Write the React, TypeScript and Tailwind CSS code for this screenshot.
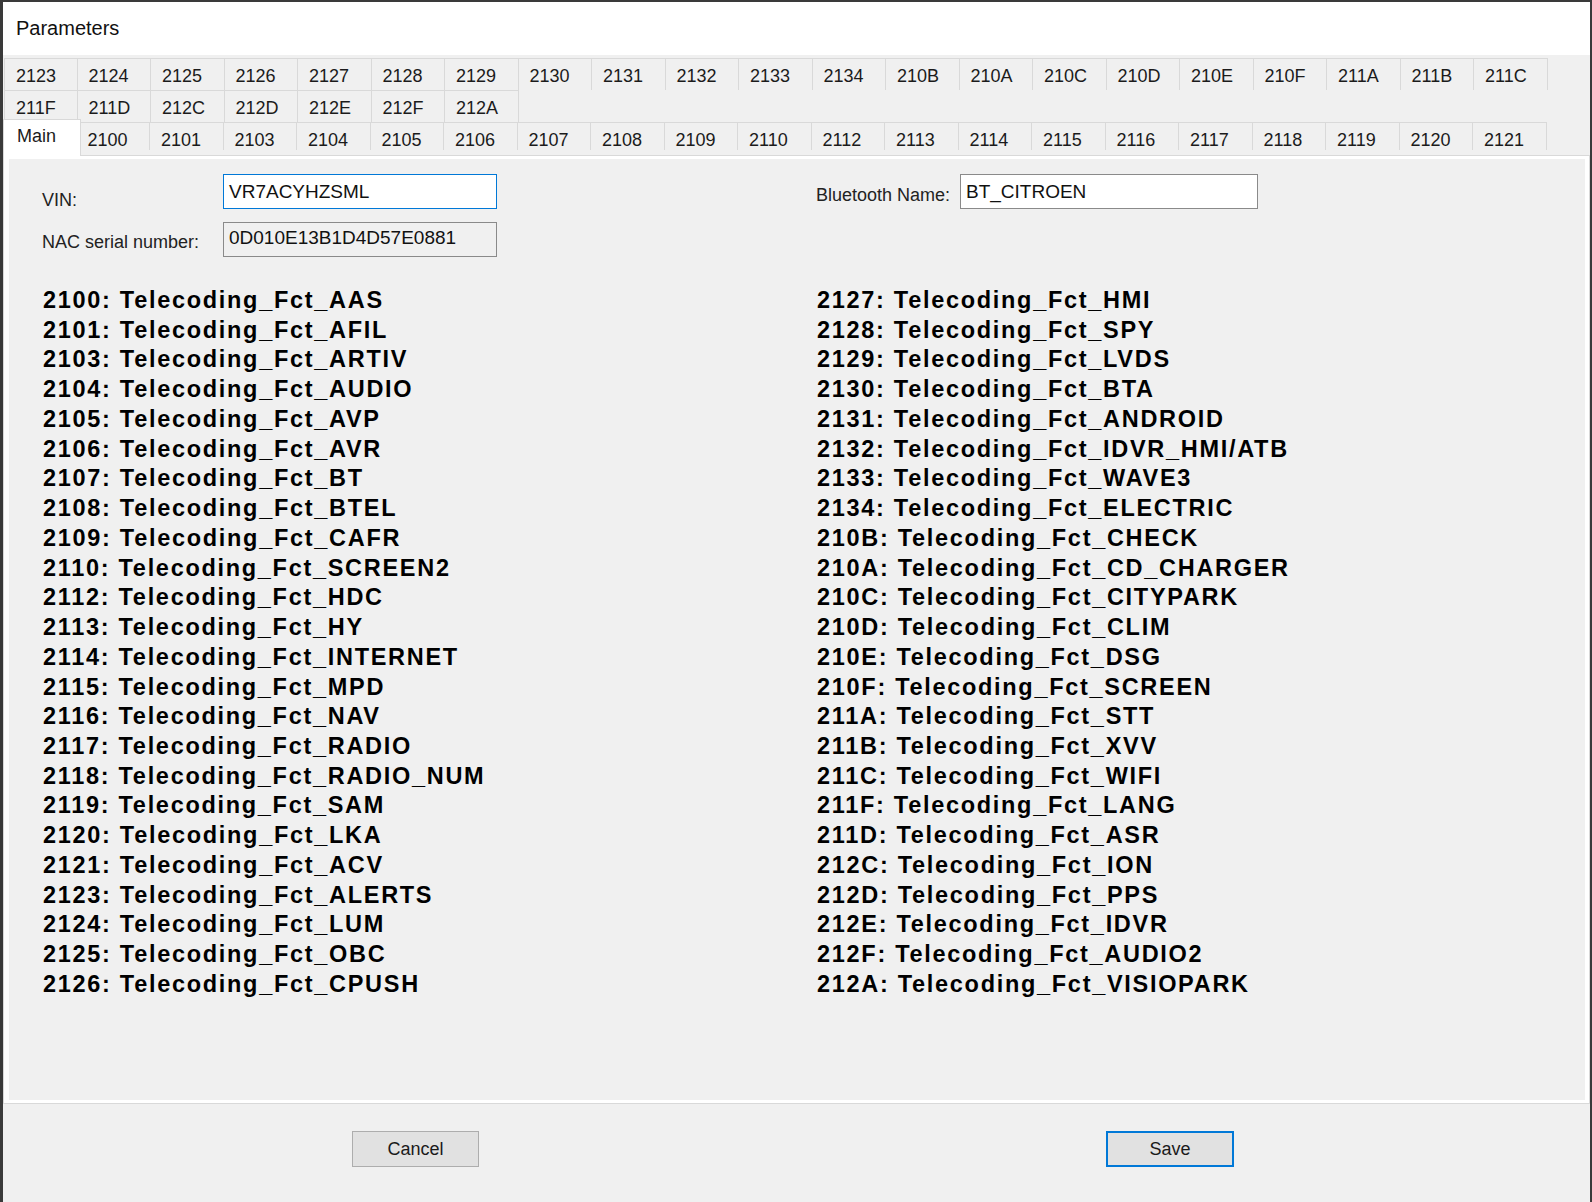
import React from 'react';

const row1 = ['2123', '2124', '2125', '2126', '2127', '2128', '2129', '2130', '2131', '2132', '2133', '2134', '210B', '210A', '210C', '210D', '210E', '210F', '211A', '211B', '211C'];
const row2 = ['211F', '211D', '212C', '212D', '212E', '212F', '212A'];
const row3 = ['2100', '2101', '2103', '2104', '2105', '2106', '2107', '2108', '2109', '2110', '2112', '2113', '2114', '2115', '2116', '2117', '2118', '2119', '2120', '2121'];

const leftList: [string, string][] = [
  ['2100', 'AAS'], ['2101', 'AFIL'], ['2103', 'ARTIV'], ['2104', 'AUDIO'], ['2105', 'AVP'], ['2106', 'AVR'],
  ['2107', 'BT'], ['2108', 'BTEL'], ['2109', 'CAFR'], ['2110', 'SCREEN2'], ['2112', 'HDC'], ['2113', 'HY'],
  ['2114', 'INTERNET'], ['2115', 'MPD'], ['2116', 'NAV'], ['2117', 'RADIO'], ['2118', 'RADIO_NUM'], ['2119', 'SAM'],
  ['2120', 'LKA'], ['2121', 'ACV'], ['2123', 'ALERTS'], ['2124', 'LUM'], ['2125', 'OBC'], ['2126', 'CPUSH'],
];

const rightList: [string, string][] = [
  ['2127', 'HMI'], ['2128', 'SPY'], ['2129', 'LVDS'], ['2130', 'BTA'], ['2131', 'ANDROID'], ['2132', 'IDVR_HMI/ATB'],
  ['2133', 'WAVE3'], ['2134', 'ELECTRIC'], ['210B', 'CHECK'], ['210A', 'CD_CHARGER'], ['210C', 'CITYPARK'], ['210D', 'CLIM'],
  ['210E', 'DSG'], ['210F', 'SCREEN'], ['211A', 'STT'], ['211B', 'XVV'], ['211C', 'WIFI'], ['211F', 'LANG'],
  ['211D', 'ASR'], ['212C', 'ION'], ['212D', 'PPS'], ['212E', 'IDVR'], ['212F', 'AUDIO2'], ['212A', 'VISIOPARK'],
];

const style = {
  tab: `w-[73.5px] shrink-0 border-t border-r border-[#d9d9d9] pl-[11px] pt-[7px] text-[18px] leading-[20px]`,
  label: `text-[18px] leading-[21px] text-[#222]`,
  box: `h-[35px] border pl-[5px] text-[19px] text-[#111]`,
  item: `text-[23.5px] leading-[29.74px] font-bold tracking-[1.7px] text-black whitespace-nowrap`,
  button: `h-[36px] w-[127px] bg-[#e1e1e1] text-[18px] text-[#1a1a1a] flex items-center justify-center`,
};

const Tab = ({ label, first }: { label: string; first?: boolean }) => (
  <div className={`${style.tab} ${first ? 'border-l' : ''}`}>{label}</div>
);

const List = ({ items }: { items: [string, string][] }) => (
  <div>
    {items.map(([code, name]) => (
      <div key={code} className={style.item}>
        {code}: Telecoding_Fct_{name}
      </div>
    ))}
  </div>
);

export default function App() {
  return (
    <div className="w-[1592px] h-[1202px] bg-[#3a3a3a] pt-[2px] pl-[3px] pr-[2px] font-['Liberation_Sans',Arial,sans-serif] text-[#1b1b1b]">
      <div className="h-full bg-[#f0f0f0] flex flex-col">
        {/* title bar */}
        <div className="h-[53px] bg-white pl-[13px] pt-[14px] text-[20px] leading-[24px] text-[#111]">Parameters</div>

        {/* tab headers */}
        <div className="mt-[2px] pl-[1px]">
          <div className="flex h-[33px] pt-[1px]">
            {row1.map((t, i) => (
              <Tab key={t} label={t} first={i === 0} />
            ))}
          </div>
          <div className="flex h-[32px]">
            {row2.map((t, i) => (
              <Tab key={t} label={t} first={i === 0} />
            ))}
          </div>
          <div className="flex h-[33px] items-start">
            <div className="relative z-10 -ml-[1px] -mr-[4.5px] -mt-[3px] h-[37px] w-[78px] shrink-0 bg-white border-t border-l border-r border-[#d9d9d9] pl-[13px] pt-[6px] text-[18px] leading-[20px]">
              Main
            </div>
            {row3.map((t) => (
              <Tab key={t} label={t} />
            ))}
          </div>
        </div>

        {/* tab page */}
        <div className="h-[949px] border border-[#d9d9d9] bg-white pt-[3px] pb-[3px] pl-[5px] pr-[4px]">
          <div className="h-full bg-[#f0f0f0] pt-[15px] pl-[33px]">
            <div className="grid grid-cols-[774px_1fr]">
              <div>
                <div className="flex">
                  <div className={`${style.label} w-[181px] pt-[16px]`}>VIN:</div>
                  <div className={`${style.box} w-[274px] bg-white border-[#0078d7] leading-[33px]`}>VR7ACYHZSML</div>
                </div>
                <div className="flex mt-[11px]">
                  <div className={`${style.label} w-[181px] pt-[10px]`}>NAC serial number:</div>
                  <div className={`${style.box} w-[274px] h-[34px] bg-[#f0f0f0] border-[#8a8a8a] leading-[29px]`}>0D010E13B1D4D57E0881</div>
                </div>
              </div>
              <div className="flex">
                <div className={`${style.label} w-[144px] pt-[11px]`}>Bluetooth Name:</div>
                <div className={`${style.box} w-[298px] bg-white border-[#8a8a8a] leading-[33px]`}>BT_CITROEN</div>
              </div>
            </div>

            <div className="mt-[29px] grid grid-cols-[774px_1fr] pl-[1px]">
              <List items={leftList} />
              <List items={rightList} />
            </div>
          </div>
        </div>

        {/* buttons */}
        <div className="flex pt-[27px]">
          <button className={`${style.button} ml-[349px] border border-[#adadad]`}>Cancel</button>
          <button className={`${style.button} ml-[627px] w-[128px] border-2 border-[#0078d7]`}>Save</button>
        </div>
      </div>
    </div>
  );
}
